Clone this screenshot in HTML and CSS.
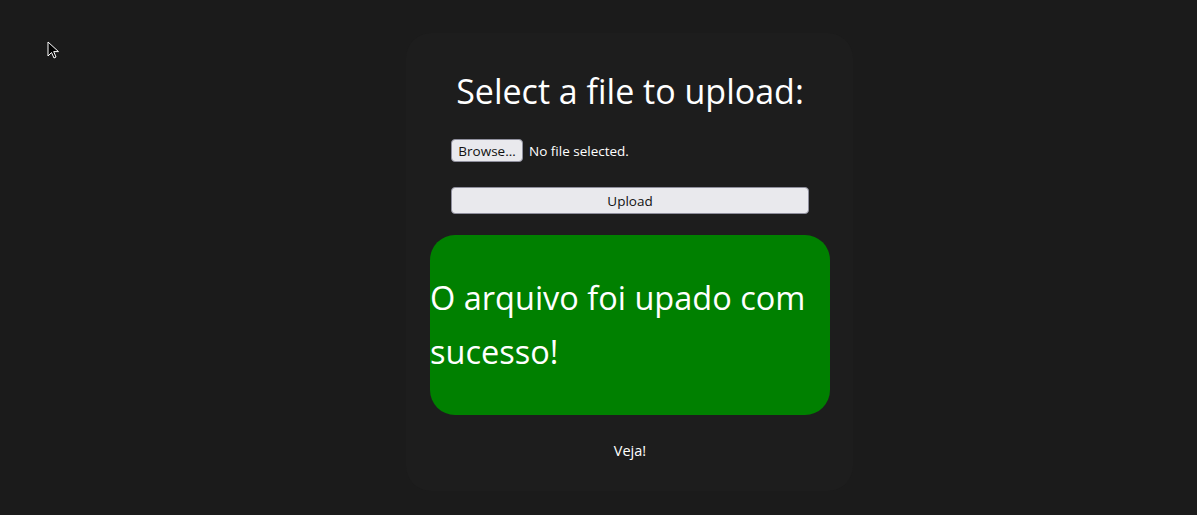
FILE: index.html
```html
<!DOCTYPE html>
<html>
<head>
<meta charset="utf-8">
<link rel="stylesheet" href="styles.css">
</head>
<body>
<div class="page">
  <div class="card">
    <h1 class="title">Select a file to upload:</h1>
    <form class="form">
      <div class="file-row">
        <button type="button" class="btn browse">Browse…</button>
        <span class="file-name">No file selected.</span>
      </div>
      <button type="button" class="btn upload">Upload</button>
    </form>
    <div class="success">
      <p class="success-text">O arquivo foi upado com sucesso!</p>
    </div>
    <div class="footer">Veja!</div>
  </div>
</div>
<svg class="cursor" width="14" height="20" viewBox="0 0 14 20">
  <path d="M1 1 L1 15 L4.5 11.5 L7 17 L9 16 L6.7 10.6 L11.5 10.6 Z" fill="#000" stroke="#fff" stroke-width="1"/>
</svg>
</body>
</html>
```
FILE: styles.css
```css
html, body {
  margin: 0;
  padding: 0;
  background: #1b1b1b;
  height: 100%;
}
body {
  font-family: "Open Sans", "Noto Sans", sans-serif;
  color: #ffffff;
  overflow: hidden;
}
.page {
  display: flex;
  justify-content: center;
  padding: 33px 0 0 62px;
}
.card {
  width: 400px;
  background: #1d1d1d;
  border-radius: 25px;
  padding: 24px 23px 30px 24px;
  display: flex;
  flex-direction: column;
  align-items: center;
}
.title {
  margin: 12px 0 0 0;
  font-size: 34px;
  font-weight: 400;
  line-height: 44px;
  text-align: center;
}
.form {
  width: 358px;
  margin-top: 26px;
  display: flex;
  flex-direction: column;
}
.file-row {
  display: flex;
  align-items: center;
  gap: 6px;
  height: 23px;
}
.btn {
  font-family: "Open Sans", "Noto Sans", sans-serif;
  font-size: 13.5px;
  color: #111;
  background: #e9e9ed;
  border: 1px solid #8f8f9d;
  border-radius: 4px;
  padding: 0;
}
.browse {
  width: 72px;
  height: 23px;
}
.file-name {
  font-size: 13.5px;
}
.upload {
  width: 358px;
  height: 27px;
  margin-top: 25px;
}
.success {
  width: 400px;
  margin-top: 21px;
  background: #008000;
  border-radius: 25px;
  display: flex;
}
.success-text {
  margin: 36px 0;
  font-size: 32.5px;
  line-height: 54px;
}
.footer {
  margin-top: 26px;
  font-size: 14.5px;
  line-height: 20px;
}
.cursor {
  position: absolute;
  left: 47px;
  top: 41px;
}
```
